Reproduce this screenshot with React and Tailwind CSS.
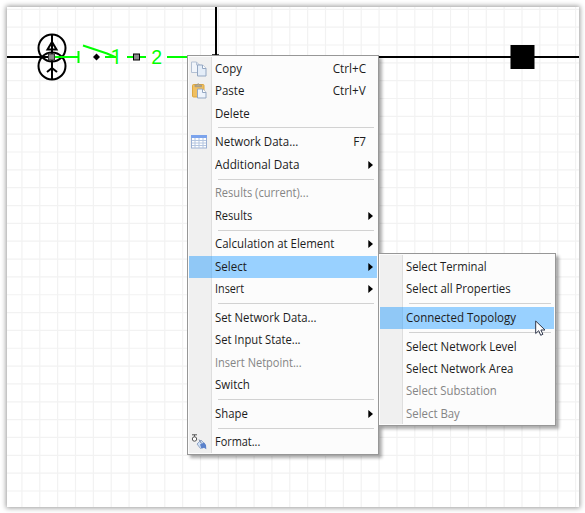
const MAIN = [
  { label: "Copy", keys: "Ctrl+C", icon: "copy" },
  { label: "Paste", keys: "Ctrl+V", icon: "paste" },
  { label: "Delete" },
  null,
  { label: "Network Data...", keys: "F7", icon: "table" },
  { label: "Additional Data", sub: true, fit: "scale-x-[0.98]" },
  null,
  { label: "Results (current)...", off: true, fit: "scale-x-[0.925]" },
  { label: "Results", sub: true, fit: "scale-x-[0.925]" },
  null,
  { label: "Calculation at Element", sub: true, fit: "scale-x-[0.955]" },
  { label: "Select", sub: true },
  { label: "Insert", sub: true, fit: "scale-x-[0.9]" },
  null,
  { label: "Set Network Data...", fit: "scale-x-[0.945]" },
  { label: "Set Input State...", fit: "scale-x-[0.935]" },
  { label: "Insert Netpoint...", off: true, fit: "scale-x-[0.92]" },
  { label: "Switch" },
  null,
  { label: "Shape", sub: true, fit: "scale-x-[0.945]" },
  null,
  { label: "Format...", icon: "format", fit: "scale-x-[0.91]" },
];
MAIN[11].active = true;

const SUB = [
  { label: "Select Terminal", fit: "scale-x-[0.94]" },
  { label: "Select all Properties", fit: "scale-x-[0.95]" },
  null,
  { label: "Connected Topology", active: true },
  null,
  { label: "Select Network Level", fit: "scale-x-[0.955]" },
  { label: "Select Network Area", fit: "scale-x-[0.95]" },
  { label: "Select Substation", off: true, fit: "scale-x-[0.945]" },
  { label: "Select Bay", off: true, fit: "scale-x-[0.95]" },
];

function Icon({ name }) {
  if (name === "copy")
    return (
      <svg width="16" height="16" viewBox="0 0 16 16">
        <path d="M.5 1h5l3 3v7.500h-8z" fill="#f1f5fb" stroke="#b4c1d4" />
        <path d="M5.500 1v3h3" fill="none" stroke="#b4c1d4" />
        <path d="M6.500 4h5l3.500 3.500V15H6.500z" fill="#e4edf8" stroke="#94a7c2" />
        <path d="M11.500 4v3.500H15" fill="#fff" stroke="#94a7c2" />
      </svg>
    );
  if (name === "paste")
    return (
      <svg width="16" height="16" viewBox="0 0 16 16">
        <rect x="1.500" y="1.500" width="11.500" height="12.500" rx="1" fill="#f0bf60" stroke="#dda73f" />
        <path d="M4 3.700V2h2L7.200.5 8.500 2h2v1.700z" fill="#b3aa92" stroke="#9b9380" strokeWidth=".7" />
        <path d="M6.500 6h5L15 9.500V15H6.500z" fill="#eef4fc" stroke="#94a7c2" />
        <path d="M11.500 6v3.500H15" fill="#fff" stroke="#94a7c2" />
      </svg>
    );
  if (name === "table")
    return (
      <svg width="16" height="16" viewBox="0 0 16 16">
        <rect x=".5" y="1.500" width="15" height="12.500" fill="#fff" stroke="#9bb0d3" />
        <rect x="0" y="1" width="16" height="3" fill="#7ba3ec" />
        <path d="M1 6.500h14M1 9h14M1 11.500h14M4 4v10M8 4v10M12 4v10" stroke="#b5c6e0" fill="none" />
      </svg>
    );
  return (
    <svg width="16" height="16" viewBox="0 0 16 16">
      <path d="M1 .8h5M3.500 .8v2" stroke="#555" fill="none" />
      <circle cx="3.500" cy="5" r="2.200" fill="#fff" stroke="#555" />
      <path d="M6 10l4-4 4 4.200-4.500 4.300z" fill="#cfe0f6" stroke="#8094b8" strokeWidth=".8" />
      <path d="M8 5.500l2.500 4" stroke="#7b89a5" fill="none" />
      <path d="M9 10.500l4-2 2 2.500.3 4.200-2.300-1.500-2.500 1.100z" fill="#5b82cb" />
    </svg>
  );
}

function Menu({ items, className }) {
  return (
    <div className={"absolute border border-[#979797] bg-[#fcfcfc] p-px shadow-[3px_3px_3px_rgba(0,0,0,0.32)] " + className}>
      <div className="h-full w-full bg-[linear-gradient(to_right,#f0f0f0_22px,#dedede_22px,#dedede_23px,#fcfcfc_23px)] pt-[0.7px]">
        {items.map((item, i) =>
          item === null ? (
            <div key={i} className="flex h-[6.42px] items-center pr-[3px] pl-[29px]">
              <div className="h-px w-full bg-[#d2d2d2]" />
            </div>
          ) : (
            <div
              key={i}
              className={
                "flex h-[22.35px] items-center pr-[3px] whitespace-nowrap " +
                (item.active ? "bg-[linear-gradient(to_right,#90c8f6_22px,#88c0ee_22px,#88c0ee_23px,#99d1ff_23px)] " : "") +
                (item.off ? "text-[#858585]" : "text-[#1c1c1c]")
              }
            >
              <div className="flex w-[26px] shrink-0 pl-[2px]">{item.icon && <Icon name={item.icon} />}</div>
              <span className={"origin-left " + (item.fit || "scale-x-[0.96]")}>{item.label}</span>
              {item.keys && <span className="mr-[8px] ml-auto origin-right scale-x-[0.98]">{item.keys}</span>}
              {item.sub && (
                <svg className="mr-px ml-auto" width="5" height="8" viewBox="0 0 5 8">
                  <path d="M.3 0L5 4 .3 8z" fill="#000" />
                </svg>
              )}
            </div>
          ),
        )}
      </div>
    </div>
  );
}

const COLS = Array.from({ length: 32 }, (_, i) => 21.9 + i * 17.86);
const ROWS = Array.from({ length: 28 }, (_, i) => 9.3 + i * 17.84);

export default function App() {
  return (
    <div className="relative h-[513px] w-[585px] overflow-hidden bg-white p-[7px] font-['Open_Sans','Noto_Sans',sans-serif] text-[12px]">
      <div className="h-[500px] w-[572px] bg-white shadow-[0_0_5px_1px_rgba(0,0,0,0.4)]" />
      <svg className="absolute top-0 left-0" width="585" height="513" viewBox="0 0 585 513">
        <g stroke="#f2f2f2" strokeWidth="1.200">
          {COLS.map((x) => <path key={x} d={`M${x} 7V507`} />)}
          {ROWS.map((y) => <path key={y} d={`M7 ${y}H579`} />)}
        </g>
        <path d="M7 57H52M378 57H579M216 7V56M212 55.300h7" stroke="#000" strokeWidth="2" />
        <g fill="none" stroke="#000" strokeWidth="2">
          <circle cx="52" cy="48" r="13.500" />
          <circle cx="52" cy="66" r="13.500" />
          <path d="M52 34v45M47.500 49.500L52 42l4.500 7.500zM47 72l5-4 5 4" />
        </g>
        <path d="M55 57H78.500M78.500 51v12M83 45.500l24 8 8 3.500M105 57h11M127 57h19M167 57h21" stroke="#0f0" strokeWidth="2" fill="none" />
        <text x="110.800" y="63.500" fill="#0f0" fontFamily="Roboto, sans-serif" fontSize="19.500">1</text>
        <text x="151.200" y="63.500" fill="#0f0" fontFamily="Liberation Sans, sans-serif" fontSize="19.500">2</text>
        <path d="M96.500 53.500L100 57l-3.500 3.500L93 57z" fill="#000" />
        <rect x="48.500" y="54" width="6" height="6" fill="#8c8c8c" stroke="#333" />
        <rect x="133.500" y="54" width="6" height="6" fill="#8c8c8c" stroke="#000" />
        <rect x="510.500" y="45" width="24" height="24" fill="#000" />
      </svg>
      <Menu items={MAIN} className="top-[55px] left-[187px] h-[400px] w-[192px]" />
      <Menu items={SUB} className="top-[253px] left-[378px] h-[173px] w-[178px]" />
      <svg className="absolute top-[320px] left-[535px]" width="12" height="17" viewBox="0 0 12 17">
        <path d="M.7 1v12.500l3-2.800 2 4.600 2.200-1-2-4.300h4.100z" fill="#fff" stroke="#30384c" />
      </svg>
    </div>
  );
}
